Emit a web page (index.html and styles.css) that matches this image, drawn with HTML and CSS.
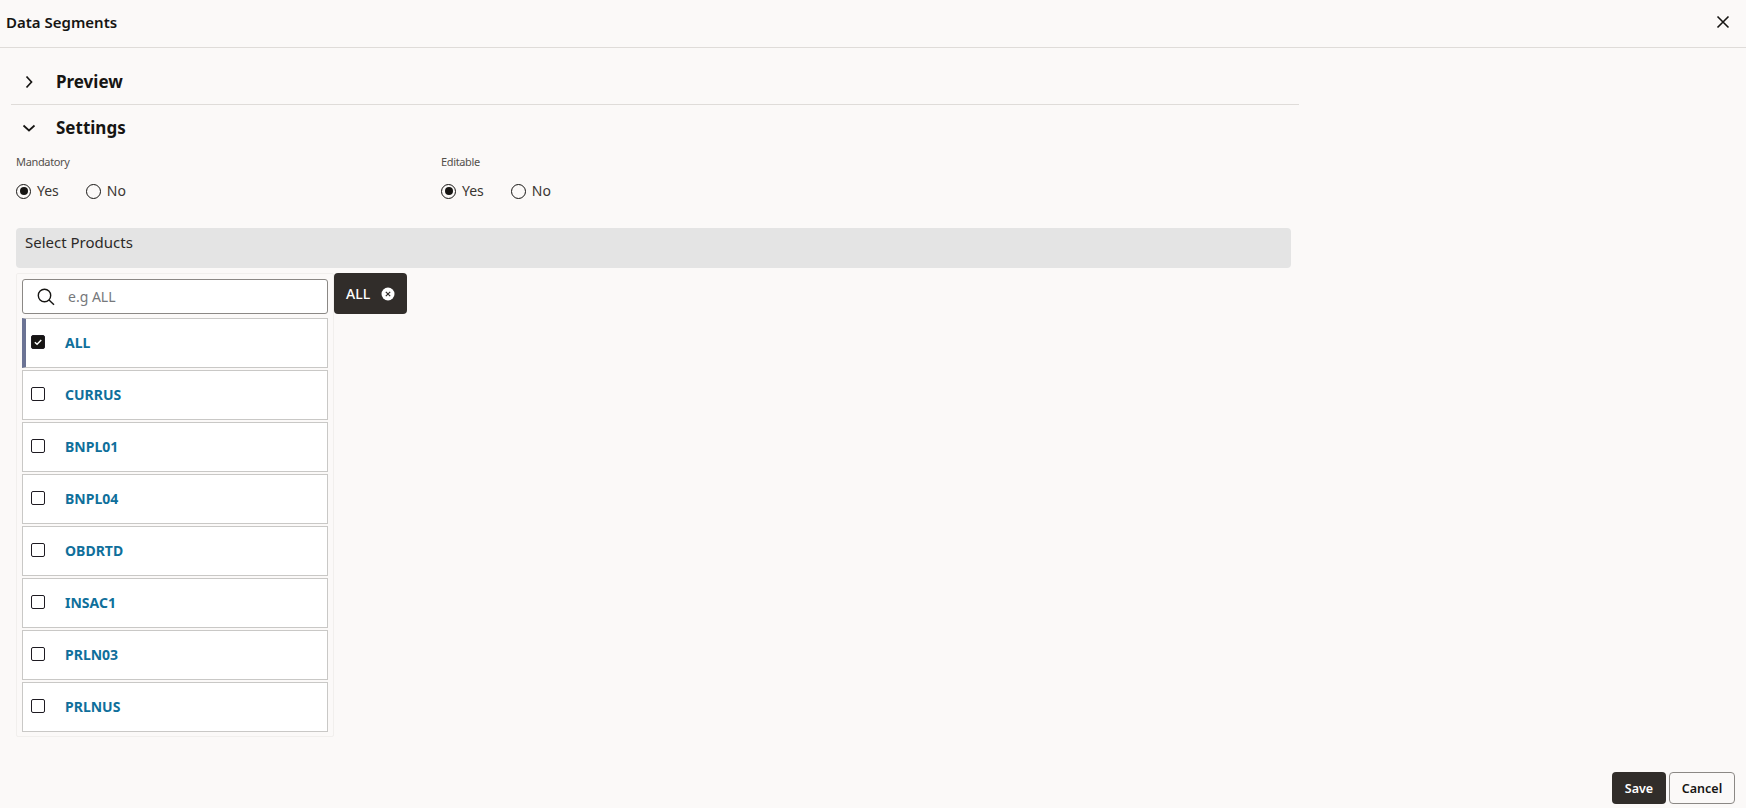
FILE: index.html
```html
<!DOCTYPE html>
<html lang="en">
<head>
<meta charset="utf-8">
<title>Data Segments</title>
<link rel="stylesheet" href="styles.css">
</head>
<body>
<div class="page">
  <header class="header">
    <h1 class="title">Data Segments</h1>
    <svg class="close" viewBox="0 0 14 14" width="14" height="14"><path d="M1.5 1.5 12.5 12.5M12.5 1.5 1.5 12.5" fill="none" stroke="#161513" stroke-width="1.6"/></svg>
  </header>
  <main class="content">
    <section class="section-head preview-head">
      <svg class="chev" viewBox="0 0 16 16" width="16" height="16"><path d="M5.5 2.5 10.5 8 5.5 13.5" fill="none" stroke="#161513" stroke-width="1.7"/></svg>
      <h2 class="section-title">Preview</h2>
    </section>
    <section class="section-head settings-head">
      <svg class="chev" viewBox="0 0 16 16" width="16" height="16"><path d="M2.5 5.5 8 10.5 13.5 5.5" fill="none" stroke="#161513" stroke-width="1.7"/></svg>
      <h2 class="section-title">Settings</h2>
    </section>
    <div class="fields">
      <div class="field">
        <div class="field-label">Mandatory</div>
        <div class="radios">
          <span class="radio-item"><span class="radio on"></span>Yes</span>
          <span class="radio-item"><span class="radio"></span>No</span>
        </div>
      </div>
      <div class="field">
        <div class="field-label">Editable</div>
        <div class="radios">
          <span class="radio-item"><span class="radio on"></span>Yes</span>
          <span class="radio-item"><span class="radio"></span>No</span>
        </div>
      </div>
    </div>
    <div class="band">Select Products</div>
    <div class="picker">
      <div class="panel">
        <div class="search">
          <svg class="search-icon" viewBox="0 0 18 18" width="18" height="18"><circle cx="7.5" cy="7.5" r="6.2" fill="none" stroke="#161513" stroke-width="1.4"/><path d="M12 12 17 16.8" fill="none" stroke="#161513" stroke-width="1.4"/></svg>
          <input class="search-input" type="text" placeholder="e.g ALL">
        </div>
        <ul class="list">
          <li class="row selected"><span class="check on"><svg viewBox="0 0 14 14" width="14" height="14"><path d="M3.3 7.2 5.9 9.6 10.8 4.6" fill="none" stroke="#fff" stroke-width="1.7"/></svg></span><span class="row-text">ALL</span></li>
          <li class="row"><span class="check"></span><span class="row-text">CURRUS</span></li>
          <li class="row"><span class="check"></span><span class="row-text">BNPL01</span></li>
          <li class="row"><span class="check"></span><span class="row-text">BNPL04</span></li>
          <li class="row"><span class="check"></span><span class="row-text">OBDRTD</span></li>
          <li class="row"><span class="check"></span><span class="row-text">INSAC1</span></li>
          <li class="row"><span class="check"></span><span class="row-text">PRLN03</span></li>
          <li class="row"><span class="check"></span><span class="row-text">PRLNUS</span></li>
        </ul>
      </div>
      <div class="chip">ALL
        <svg class="chip-x" viewBox="0 0 14 14" width="14" height="14"><circle cx="7" cy="7" r="6.5" fill="#fff"/><path d="M4.8 4.8 9.2 9.2M9.2 4.8 4.8 9.2" fill="none" stroke="#312d2a" stroke-width="1.2"/></svg>
      </div>
    </div>
  </main>
  <footer class="footer">
    <button class="btn btn-primary" type="button">Save</button>
    <button class="btn btn-secondary" type="button">Cancel</button>
  </footer>
</div>
</body>
</html>
```
FILE: styles.css
```css
* { box-sizing: border-box; }
html, body { margin: 0; height: 100%; }
body {
  background: #fbf9f8;
  color: #161513;
  font-family: "Noto Sans", "Open Sans", sans-serif;
  overflow: hidden;
}
.page { height: 808px; display: flex; flex-direction: column; }
.header {
  height: 48px;
  flex: none;
  display: flex;
  align-items: center;
  justify-content: space-between;
  padding: 0 16px 3px 6px;
  border-bottom: 1px solid #dfdcd9;
}
.title { margin: 0; font-size: 15px; font-weight: 600; line-height: 20px; }
.content { flex: 1; padding: 0 0 0 11px; }
.section-head { width: 1288px; display: flex; align-items: center; padding-left: 10px; }
.preview-head { height: 57px; border-bottom: 1px solid #dfdcd9; padding-top: 11px; }
.settings-head { height: 46px; }
.chev { flex: none; }
.section-title { margin: 0 0 0 19px; font-size: 17px; font-weight: 700; line-height: 24px; }
.fields { display: flex; margin-left: 5px; margin-top: 3px; }
.field { width: 425px; }
.field-label { font-size: 11px; line-height: 16px; letter-spacing: -0.35px; color: #54504c; }
.radios { display: flex; gap: 27px; margin-top: 11px; font-size: 14px; line-height: 20px; color: #3a3633; }
.radio-item { display: flex; align-items: center; gap: 6px; }
.radio {
  width: 15px; height: 15px; border-radius: 50%;
  border: 1.3px solid #161513;
  display: flex; align-items: center; justify-content: center;
}
.radio.on::after { content: ""; width: 8px; height: 8px; border-radius: 50%; background: #161513; }
.band {
  width: 1275px;
  height: 40px;
  margin: 27px 0 0 5px;
  padding: 4px 9px;
  background: #e4e4e4;
  border-radius: 4px;
  font-size: 15px;
  line-height: 20px;
  color: #2c2a28;
}
.picker { display: flex; align-items: flex-start; margin: 5px 0 0 5px; }
.panel {
  width: 318px;
  height: 464px;
  padding: 5px;
  border: 1px solid #f1efed;
  border-radius: 2px;
}
.search {
  height: 35px;
  display: flex;
  align-items: center;
  padding: 0 14px;
  background: #fff;
  border: 1px solid #8b8885;
  border-radius: 3px;
}
.search-icon { flex: none; }
.search-input {
  flex: 1; min-width: 0;
  margin-left: 13px;
  padding: 0;
  border: 0;
  outline: 0;
  background: transparent;
  font: 14px "Noto Sans", sans-serif;
}
.search-input::placeholder { color: #76787b; opacity: 1; }
.list { list-style: none; margin: 4px 0 0; padding: 0; display: flex; flex-direction: column; gap: 2px; }
.row {
  height: 50px;
  display: flex;
  align-items: flex-start;
  padding: 16px 0 0 8px;
  background: #fff;
  border: 1px solid #c9c8c6;
}
.row.selected { border-left: 4px solid #6b7394; padding-left: 5px; }
.check {
  flex: none;
  width: 14px; height: 14px;
  border: 1.3px solid #1e1b22;
  border-radius: 2px;
  background: #fff;
  display: flex; align-items: center; justify-content: center;
}
.check.on { background: #161513; }
.row-text { margin-left: 20px; font-size: 14px; font-weight: 700; line-height: 16px; color: #0f6f9b; }
.chip {
  width: 73px;
  height: 41px;
  flex: none;
  display: flex;
  align-items: center;
  padding-left: 12px;
  background: #312d2a;
  color: #fff;
  border-radius: 4px;
  font-size: 14px;
  font-weight: 500;
}
.chip-x { margin-left: 11px; }
.footer { flex: none; display: flex; justify-content: flex-end; gap: 3px; padding: 0 11px 4px 0; }
.btn {
  height: 32px;
  padding: 0;
  border-radius: 4px;
  font: 600 12.5px "Noto Sans", sans-serif;
}
.btn-primary { width: 54px; background: #312d2a; color: #fff; border: 0; }
.btn-secondary { width: 66px; background: #fbf9f8; color: #161513; border: 1px solid #8b8885; }
```
